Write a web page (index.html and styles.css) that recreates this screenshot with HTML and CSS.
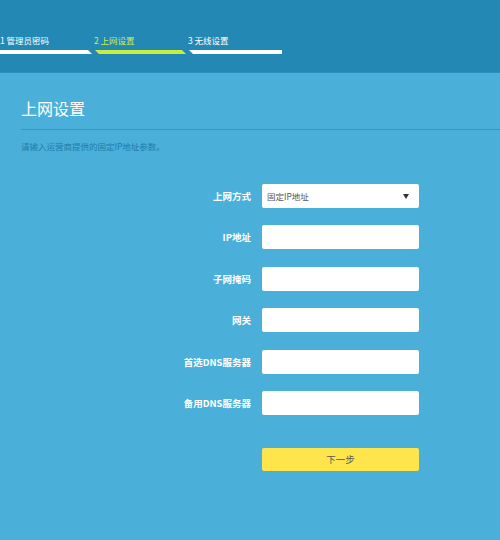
FILE: index.html
```html
<!DOCTYPE html>
<html lang="zh">
<head>
<meta charset="utf-8">
<title>上网设置</title>
<link rel="stylesheet" href="styles.css">
</head>
<body>
<header class="topbar">
  <div class="steps">
    <div class="step">
      <span class="step-text">1 管理员密码</span>
      <span class="bar bar-first"></span>
    </div>
    <div class="step step-active">
      <span class="step-text">2 上网设置</span>
      <span class="bar"></span>
    </div>
    <div class="step">
      <span class="step-text">3 无线设置</span>
      <span class="bar bar-last"></span>
    </div>
  </div>
</header>
<main class="content">
  <h1 class="title">上网设置</h1>
  <p class="hint">请输入运营商提供的固定IP地址参数。</p>
  <form class="form">
    <label class="label">上网方式</label>
    <div class="field select"><span class="select-text">固定IP地址</span><span class="arrow"></span></div>
    <label class="label">IP地址</label>
    <div class="field"></div>
    <label class="label">子网掩码</label>
    <div class="field"></div>
    <label class="label">网关</label>
    <div class="field"></div>
    <label class="label">首选DNS服务器</label>
    <div class="field"></div>
    <label class="label">备用DNS服务器</label>
    <div class="field"></div>
    <span class="spacer"></span>
    <div class="button">下一步</div>
  </form>
</main>
</body>
</html>
```
FILE: styles.css
```css
html, body {
  margin: 0;
  padding: 0;
}
body {
  width: 500px;
  height: 540px;
  overflow: hidden;
  background: #4aafd9;
  font-family: "Noto Sans CJK SC", "Noto Sans", sans-serif;
}
.topbar {
  height: 72px;
  background: #2388b4;
  border-bottom: 1px solid #2a8fbd;
  box-sizing: content-box;
}
.steps {
  display: flex;
  padding-top: 34px;
}
.step {
  width: 94px;
  display: flex;
  flex-direction: column;
}
.step-text {
  font-size: 8.5px;
  line-height: 12px;
  color: #ffffff;
  height: 12px;
  margin-bottom: 4px;
}
.step-active .step-text {
  color: #c9f04c;
}
.bar {
  display: block;
  height: 4px;
  width: 92px;
  margin-left: 1px;
  background: #ffffff;
  clip-path: polygon(0 0, 87px 0, 91px 100%, 4px 100%);
}
.step-active .bar {
  background: #c8ee3b;
}
.bar-first {
  margin-left: 0;
  width: 92px;
  clip-path: polygon(0 0, 88px 0, 92px 100%, 0 100%);
}
.bar-last {
  width: 93px;
  clip-path: polygon(0 0, 100% 0, 100% 100%, 4px 100%);
}
.content {
  padding: 24px 0 0 21px;
}
.title {
  margin: 0;
  font-size: 16px;
  line-height: 22px;
  font-weight: 400;
  color: #ffffff;
  padding-bottom: 10px;
  border-bottom: 1px solid #3596c3;
}
.hint {
  margin: 10px 0 0;
  font-size: 8.5px;
  line-height: 12px;
  color: #1f7cab;
}
.form {
  margin-top: 32px;
  display: grid;
  grid-template-columns: 230px 157px;
  column-gap: 11px;
  row-gap: 17.4px;
  align-items: center;
}
.label {
  text-align: right;
  font-size: 9.5px;
  font-weight: 700;
  color: #ffffff;
}
.field {
  height: 24px;
  background: #ffffff;
  border-radius: 2px;
}
.select {
  display: flex;
  align-items: center;
  justify-content: space-between;
  padding: 0 10px 0 5px;
}
.select-text {
  font-size: 8.5px;
  color: #555555;
}
.arrow {
  width: 0;
  height: 0;
  border-left: 3.5px solid transparent;
  border-right: 3.5px solid transparent;
  border-top: 5px solid #333333;
}
.spacer {
  height: 24px;
  margin-top: 15px;
}
.button {
  margin-top: 15px;
  height: 23px;
  background: #ffe54c;
  border-radius: 2px;
  display: flex;
  align-items: center;
  justify-content: center;
  font-size: 9.5px;
  color: #555555;
}
```
